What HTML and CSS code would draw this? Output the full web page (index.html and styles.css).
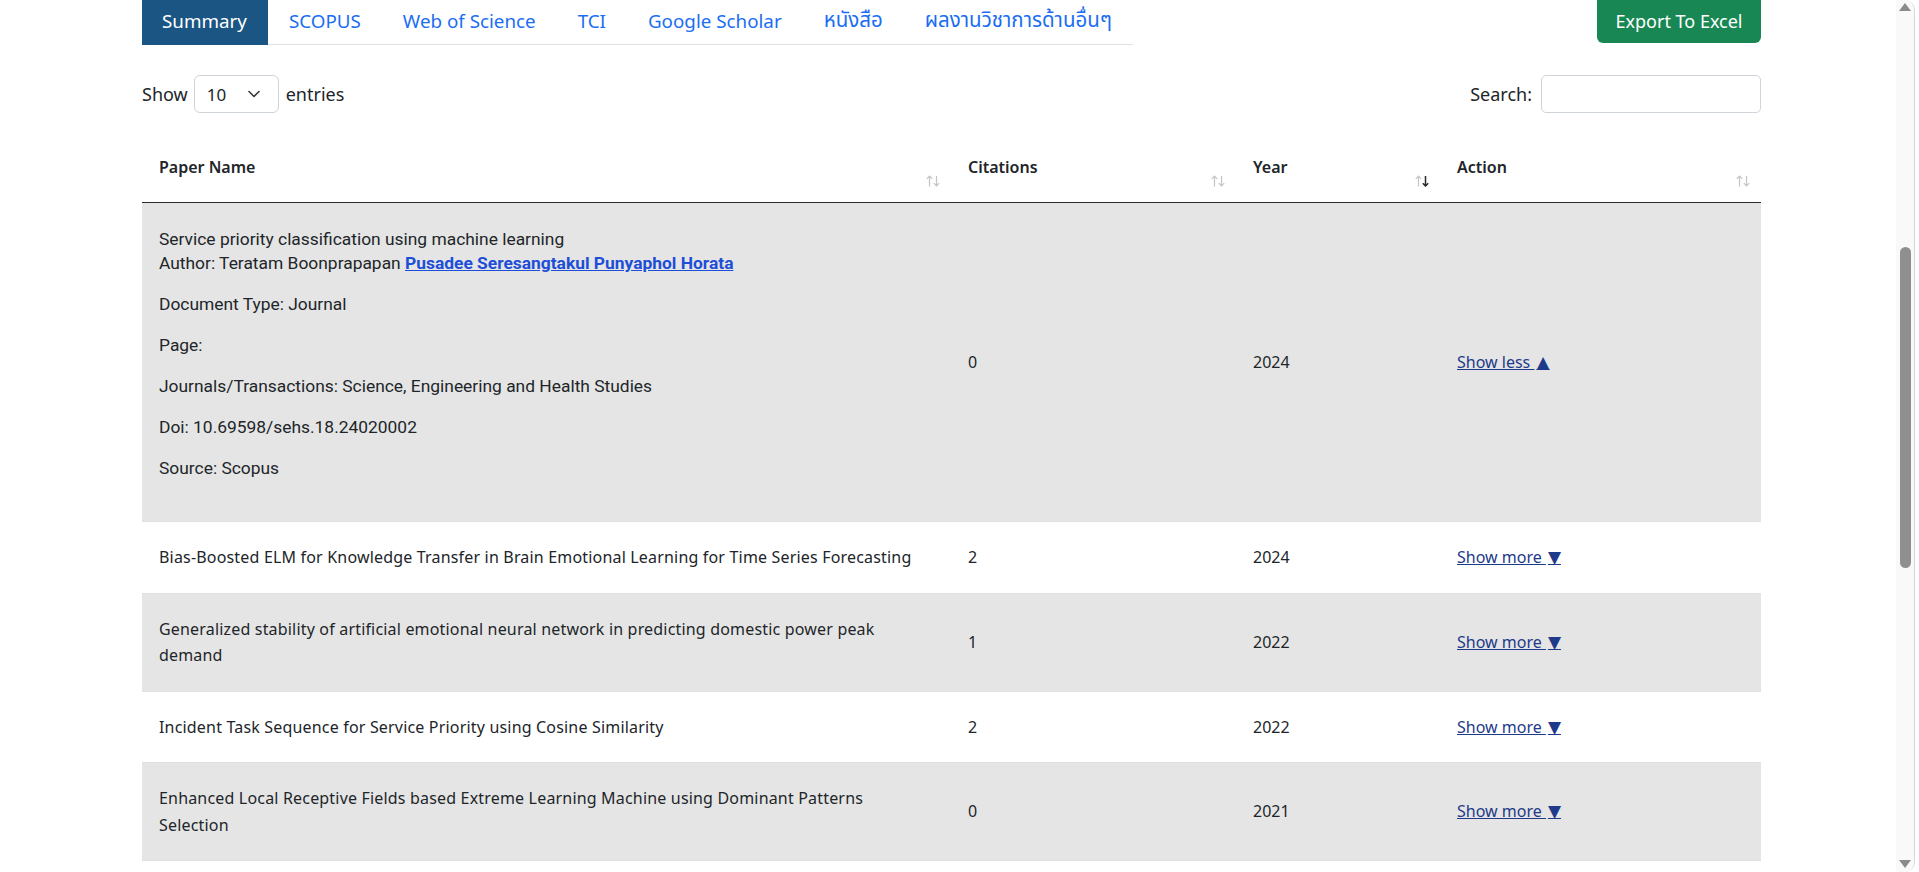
FILE: index.html
```html
<!DOCTYPE html>
<html lang="th">
<head>
<meta charset="utf-8">
<title>ผลงานวิชาการ</title>
<link rel="stylesheet" href="styles.css">
</head>
<body>
<div class="frame">
  <main class="page">
    <div class="topbar">
      <ul class="tabs">
        <li class="tab active">Summary</li>
        <li class="tab">SCOPUS</li>
        <li class="tab">Web of Science</li>
        <li class="tab">TCI</li>
        <li class="tab">Google Scholar</li>
        <li class="tab thai">หนังสือ</li>
        <li class="tab thai">ผลงานวิชาการด้านอื่นๆ</li>
      </ul>
      <button class="export" type="button">Export To Excel</button>
    </div>

    <div class="controls">
      <div class="length">
        <span>Show</span>
        <span class="select">10
          <svg class="chev" width="12" height="8" viewBox="0 0 12 8"><path d="M1 1.5 L6 6.5 L11 1.5" fill="none" stroke="#343a40" stroke-width="1.6" stroke-linecap="round" stroke-linejoin="round"/></svg>
        </span>
        <span>entries</span>
      </div>
      <div class="search">
        <span>Search:</span>
        <input class="search-input" type="search" aria-label="Search">
      </div>
    </div>

    <table class="papers">
      <colgroup>
        <col class="c-name"><col class="c-cite"><col class="c-year"><col class="c-act">
      </colgroup>
      <thead>
        <tr>
          <th>Paper Name<svg class="sort" width="14" height="12" viewBox="0 0 14 12"><path class="up" d="M3.5 11.5V1M0.8 3.8L3.5 1L6.2 3.8"/><path class="down" d="M10.5 1V11M7.8 8.2L10.5 11L13.2 8.2"/></svg></th>
          <th>Citations<svg class="sort" width="14" height="12" viewBox="0 0 14 12"><path class="up" d="M3.5 11.5V1M0.8 3.8L3.5 1L6.2 3.8"/><path class="down" d="M10.5 1V11M7.8 8.2L10.5 11L13.2 8.2"/></svg></th>
          <th>Year<svg class="sort" width="14" height="12" viewBox="0 0 14 12"><path class="up" d="M3.5 11.5V1M0.8 3.8L3.5 1L6.2 3.8"/><path class="down on" d="M10.5 1V11M7.8 8.2L10.5 11L13.2 8.2"/></svg></th>
          <th>Action<svg class="sort" width="14" height="12" viewBox="0 0 14 12"><path class="up" d="M3.5 11.5V1M0.8 3.8L3.5 1L6.2 3.8"/><path class="down" d="M10.5 1V11M7.8 8.2L10.5 11L13.2 8.2"/></svg></th>
        </tr>
      </thead>
      <tbody>
        <tr class="odd expanded">
          <td class="name">
            <div class="detail">
              <p>Service priority classification using machine learning<br>Author: Teratam Boonprapapan <a class="author" href="#">Pusadee Seresangtakul Punyaphol Horata</a></p>
              <p>Document Type: Journal</p>
              <p>Page:</p>
              <p>Journals/Transactions: Science, Engineering and Health Studies</p>
              <p>Doi: 10.69598/sehs.18.24020002</p>
              <p>Source: Scopus</p>
            </div>
          </td>
          <td>0</td>
          <td>2024</td>
          <td><a class="toggle" href="#">Show less <span class="tri">▲</span></a></td>
        </tr>
        <tr>
          <td class="name">Bias-Boosted ELM for Knowledge Transfer in Brain Emotional Learning for Time Series Forecasting</td>
          <td>2</td>
          <td>2024</td>
          <td><a class="toggle" href="#">Show more <span class="tri">▼</span></a></td>
        </tr>
        <tr class="odd">
          <td class="name">Generalized stability of artificial emotional neural network in predicting domestic power peak demand</td>
          <td>1</td>
          <td>2022</td>
          <td><a class="toggle" href="#">Show more <span class="tri">▼</span></a></td>
        </tr>
        <tr>
          <td class="name">Incident Task Sequence for Service Priority using Cosine Similarity</td>
          <td>2</td>
          <td>2022</td>
          <td><a class="toggle" href="#">Show more <span class="tri">▼</span></a></td>
        </tr>
        <tr class="odd">
          <td class="name">Enhanced Local Receptive Fields based Extreme Learning Machine using Dominant Patterns Selection</td>
          <td>0</td>
          <td>2021</td>
          <td><a class="toggle" href="#">Show more <span class="tri">▼</span></a></td>
        </tr>
      </tbody>
    </table>
  </main>

  <div class="scrollbar" aria-hidden="true">
    <span class="sb-up"></span>
    <span class="sb-thumb"></span>
    <span class="sb-down"></span>
  </div>
</div>
</body>
</html>
```

FILE: styles.css
```css
* { box-sizing: border-box; }

html, body {
  margin: 0;
  height: 100%;
  background: #ffffff;
}

body {
  padding-right: 4px;
  overflow: hidden;
  font-family: "Noto Sans", "Noto Sans Thai", "Open Sans", sans-serif;
  color: #212529;
}

.frame {
  display: flex;
  height: 872px;
  border-right: 1px solid #d6d6d6;
  border-radius: 0 10px 10px 0;
  overflow: hidden;
}

.page {
  flex: 1;
  padding-left: 142px;
  overflow: hidden;
}

/* ---------- top bar ---------- */
.topbar {
  width: 1619px;
  display: flex;
  justify-content: space-between;
  align-items: flex-start;
}

.tabs {
  display: flex;
  margin: 0;
  padding: 0;
  list-style: none;
  border-bottom: 1px solid #dee2e6;
}

.tab {
  height: 44px;
  padding: 0 21px 3px;
  display: flex;
  align-items: center;
  font-size: 18.8px;
  color: #1b6ef3;
  white-space: nowrap;
}

.tab.thai {
  font-size: 20.5px;
}

.tab.active {
  background: #1b5584;
  color: #ffffff;
  padding: 0 21px 3px 20px;
  margin-bottom: -1px;
  height: 45px;
}

.export {
  margin-top: -6px;
  height: 49px;
  width: 164px;
  padding: 4px 0 0;
  border: 0;
  border-radius: 6px;
  background: #198754;
  color: #ffffff;
  font-family: inherit;
  font-size: 18px;
}

/* ---------- controls ---------- */
.controls {
  width: 1619px;
  margin-top: 30px;
  height: 38px;
  display: flex;
  justify-content: space-between;
  align-items: center;
  font-size: 18px;
}

.length, .search {
  display: flex;
  align-items: center;
}

.select {
  margin: 0 7px 0 6px;
  width: 85px;
  height: 38px;
  padding: 0 18px 0 12px;
  display: flex;
  align-items: center;
  justify-content: space-between;
  border: 1px solid #ced4da;
  border-radius: 6px;
  font-size: 17px;
}

.search-input {
  margin-left: 9px;
  width: 220px;
  height: 38px;
  border: 1px solid #ced4da;
  border-radius: 5px;
  background: #fff;
}

/* ---------- table ---------- */
.papers {
  margin-top: 32px;
  width: 1619px;
  table-layout: fixed;
  border-collapse: collapse;
}

.c-name { width: 809px; }
.c-cite { width: 285px; }
.c-year { width: 204px; }
.c-act { width: 321px; }

.papers th {
  position: relative;
  text-align: left;
  padding: 10px 17px 23px;
  font-size: 16px;
  line-height: 24px;
  font-weight: 600;
  border-bottom: 1px solid #2a2a2a;
}

.sort {
  position: absolute;
  right: 11px;
  bottom: 15px;
  fill: none;
  stroke-width: 1.2;
}
.sort .up, .sort .down { stroke: #c4c4c4; }
.sort .down.on { stroke: #2b2b2b; stroke-width: 1.5; }

.papers td {
  padding: 22px 17px 22px;
  font-size: 16px;
  line-height: 26.5px;
  vertical-align: middle;
  border-bottom: 1px solid #dee2e6;
}

.papers td.name {
  padding-right: 30px;
  letter-spacing: 0.18px;
}

.papers tr.odd td { background: #e5e5e5; }

.papers tr.expanded td { padding-top: 24px; padding-bottom: 24px; }

.detail {
  font-family: Roboto, "Noto Sans", sans-serif;
  font-size: 17.4px;
  line-height: 24px;
  letter-spacing: 0;
}

.detail p { margin: 0 0 17px; }

.author {
  color: #1d4ed8;
  font-weight: 700;
}

.toggle {
  color: #1e3a8a;
}

.tri {
  font-family: "DejaVu Sans", sans-serif;
  font-size: 17px;
  line-height: 1;
  padding-left: 2px;
}

/* ---------- scrollbar ---------- */
.scrollbar {
  width: 18px;
  background: #f9f9f9;
  display: flex;
  flex-direction: column;
  align-items: center;
  padding: 3px 0 4px;
}

.sb-up {
  width: 0;
  height: 0;
  border-left: 6px solid transparent;
  border-right: 6px solid transparent;
  border-bottom: 8px solid #8b8b8b;
}

.sb-thumb {
  margin-top: 236px;
  width: 11px;
  height: 321px;
  border-radius: 6px;
  background: #8f8f8f;
}

.sb-down {
  margin-top: auto;
  width: 0;
  height: 0;
  border-left: 6px solid transparent;
  border-right: 6px solid transparent;
  border-top: 8px solid #8b8b8b;
}
```
